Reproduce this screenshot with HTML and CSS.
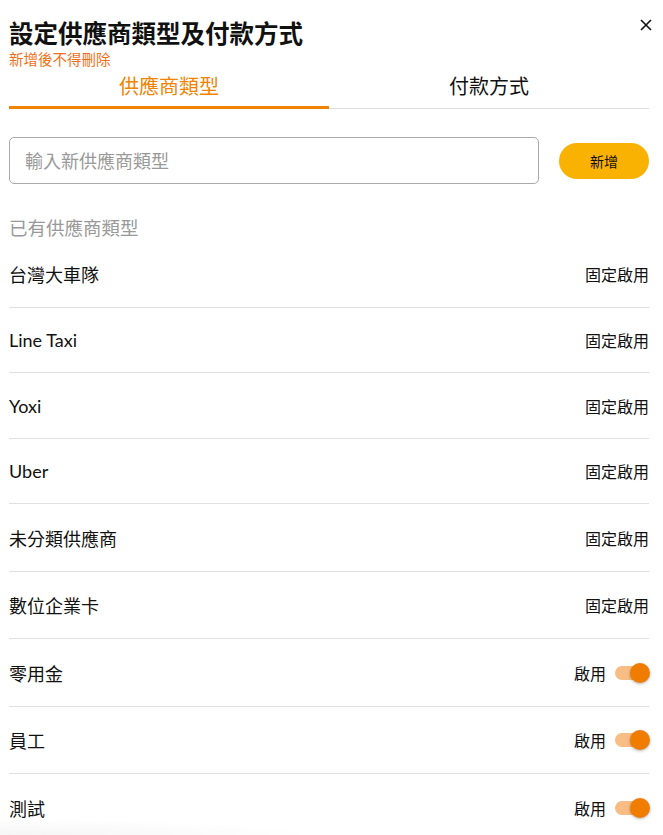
FILE: index.html
```html
<!DOCTYPE html>
<html lang="zh-Hant">
<head>
    <meta charset="UTF-8">
    <meta name="viewport" content="width=device-width, initial-scale=1.0">
    <title>設定供應商類型及付款方式</title>
    <link rel="stylesheet" href="styles.css">
</head>
<body>
    <div class="modal">
        <div class="modal-header">
            <div>
                <h1 class="modal-title">設定供應商類型及付款方式</h1>
                <p class="modal-note">新增後不得刪除</p>
            </div>
            <button class="close-btn" aria-label="關閉">
                <svg width="12" height="12" viewBox="0 0 12 12">
                    <path d="M1 1 L11 11 M11 1 L1 11" stroke="#111" stroke-width="1.6" />
                </svg>
            </button>
        </div>

        <!-- 分頁 -->
        <div class="tabs">
            <div class="tab active">供應商類型</div>
            <div class="tab">付款方式</div>
        </div>

        <div class="add-row">
            <input class="add-input" type="text" placeholder="輸入新供應商類型">
            <button class="add-btn">新增</button>
        </div>

        <p class="section-label">已有供應商類型</p>

        <ul class="type-list">
            <li class="type-item"><span class="type-name">台灣大車隊</span><span class="type-status">固定啟用</span></li>
            <li class="type-item"><span class="type-name">Line Taxi</span><span class="type-status">固定啟用</span></li>
            <li class="type-item"><span class="type-name">Yoxi</span><span class="type-status">固定啟用</span></li>
            <li class="type-item"><span class="type-name">Uber</span><span class="type-status">固定啟用</span></li>
            <li class="type-item"><span class="type-name">未分類供應商</span><span class="type-status">固定啟用</span></li>
            <li class="type-item"><span class="type-name">數位企業卡</span><span class="type-status">固定啟用</span></li>
            <li class="type-item"><span class="type-name">零用金</span><span class="type-status">啟用<span class="toggle on"></span></span></li>
            <li class="type-item"><span class="type-name">員工</span><span class="type-status">啟用<span class="toggle on"></span></span></li>
            <li class="type-item"><span class="type-name">測試</span><span class="type-status">啟用<span class="toggle on"></span></span></li>
        </ul>
    </div>
    <div class="bottom-fade"></div>
</body>
</html>
```

FILE: styles.css
```css
body {
    margin: 0;
    background: #fff;
    font-family: Lato, "Noto Sans CJK TC", sans-serif;
    color: #111;
    overflow: hidden;
}

.modal {
    padding: 16px 14px 0 9px;
}

.modal-header {
    display: flex;
    justify-content: space-between;
    align-items: flex-start;
}

.modal-title {
    margin: 0;
    font-size: 24.5px;
    font-weight: 700;
    line-height: 36px;
}

.modal-note {
    margin: -1px 0 0;
    font-size: 14.5px;
    line-height: 18px;
    color: #f2701a; /* 橘紅 */
}

.close-btn {
    background: none;
    border: none;
    padding: 0;
    margin: 3px -3px 0 0;
    cursor: pointer;
}

/* 分頁 */
.tabs {
    display: flex;
    margin-top: 3px;
    border-bottom: 1px solid #ddd;
}

.tab {
    flex: 1;
    text-align: center;
    font-size: 20px;
    line-height: 28px;
    padding-bottom: 6px;
    margin-bottom: -1px;
    border-bottom: 3px solid transparent;
}

.tab.active {
    color: #f08300;
    border-bottom-color: #f08300;
}

.add-row {
    display: flex;
    align-items: center;
    gap: 20px;
    margin-top: 28px;
}

.add-input {
    flex: 1;
    height: 47px;
    box-sizing: border-box;
    border: 1px solid #aaa;
    border-radius: 5px;
    padding: 0 15px;
    font-family: inherit;
    font-size: 18px;
    color: #333;
}

.add-input::placeholder {
    color: #999;
}

.add-btn {
    width: 90px;
    height: 36px;
    border: none;
    border-radius: 18px;
    background: #f9b102;
    font-family: inherit;
    font-size: 14px;
    color: #111;
    cursor: pointer;
}

.section-label {
    margin: 32px 0 0;
    font-size: 18.5px;
    line-height: 24px;
    color: #999;
}

.type-list {
    list-style: none;
    margin: 0;
    padding: 0;
}

.type-item {
    display: flex;
    justify-content: space-between;
    align-items: center;
    padding: 20.5px 0 20px;
    border-bottom: 1px solid #e0e0e0;
}

.type-name {
    font-size: 18px;
}

.type-status {
    display: flex;
    align-items: center;
    font-size: 16px;
}

/* 開關 */
.toggle {
    position: relative;
    width: 34px;
    height: 14px;
    margin-left: 9px;
    border-radius: 7px;
    background: #f7bd84;
}

.toggle.on::after {
    content: "";
    position: absolute;
    right: -1px;
    top: -3px;
    width: 20px;
    height: 20px;
    border-radius: 50%;
    background: #f07d00;
    box-shadow: 0 1px 3px rgba(0, 0, 0, 0.3);
}

.bottom-fade {
    position: fixed;
    left: 0;
    bottom: 0;
    width: 320px;
    height: 16px;
    background: radial-gradient(ellipse at bottom left, rgba(0, 0, 0, 0.04), rgba(0, 0, 0, 0) 70%);
    pointer-events: none;
}
```
